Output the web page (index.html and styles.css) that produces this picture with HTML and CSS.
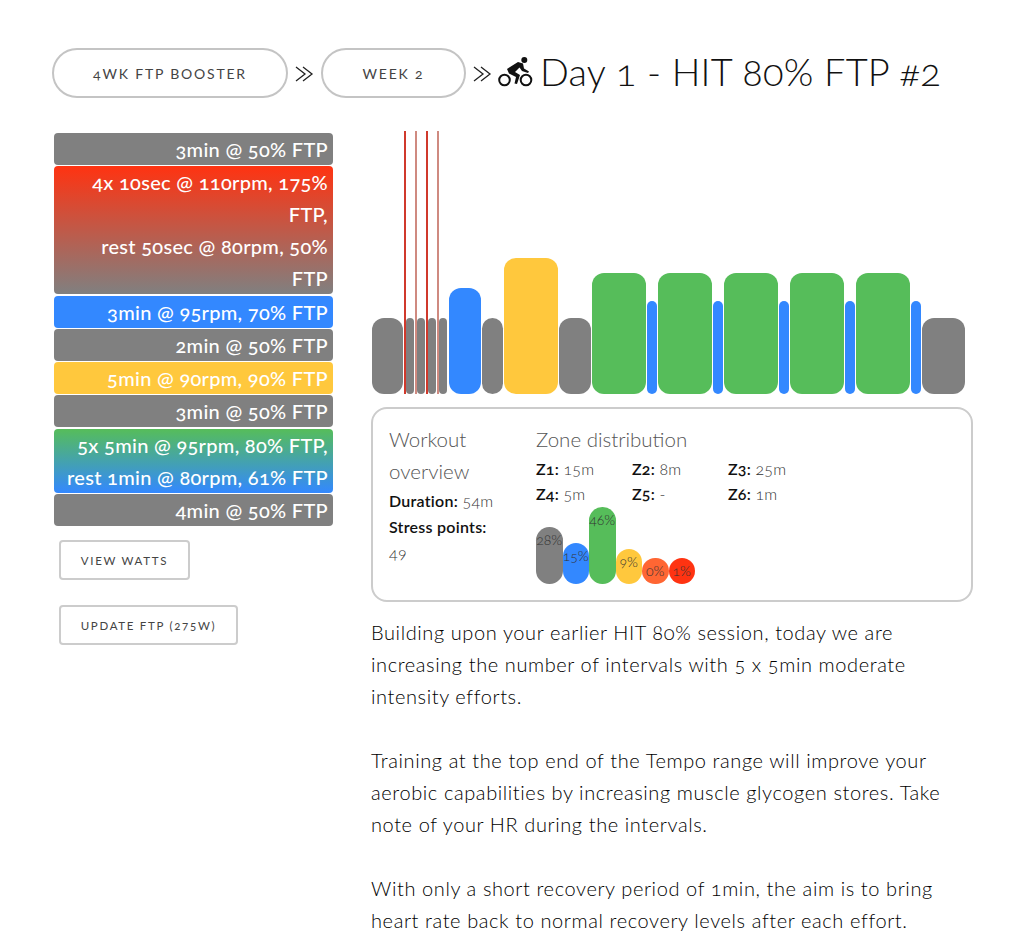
FILE: index.html
```html
<!DOCTYPE html>
<html lang="en">
<head>
<meta charset="utf-8">
<title>Day 1 - HIT 80% FTP #2</title>
<link rel="stylesheet" href="styles.css">
</head>
<body>
<header class="crumbs">
  <a class="pill pill-plan">4wk FTP Booster</a>
  <svg class="sep" viewBox="0 0 33 50" aria-hidden="true"><path d="M8 19 L17 26 L8 33 M15 19 L24 26 L15 33" fill="none" stroke="#222" stroke-width="1.3"/></svg>
  <a class="pill pill-week">Week 2</a>
  <svg class="sep" viewBox="0 0 33 50" aria-hidden="true"><path d="M8 19 L17 26 L8 33 M15 19 L24 26 L15 33" fill="none" stroke="#222" stroke-width="1.3"/></svg>
  <svg class="bike" viewBox="0 0 36 36" aria-hidden="true">
    <circle cx="7.5" cy="27" r="5.3" fill="none" stroke="#111" stroke-width="2"/>
    <circle cx="29" cy="27" r="5.3" fill="none" stroke="#111" stroke-width="2"/>
    <circle cx="27.3" cy="7" r="3" fill="#111"/>
    <path d="M10 16 L21 9 L26 10.5 L27 15.5 L32 18.5 L31 20 L25 18 L22.5 14.5 L18 19 L23 22 L20 31 L17.5 30.5 L19 24 L12 20.5 Z" fill="#111"/>
  </svg>
  <h1 class="title">Day 1 - HIT 80% FTP #2</h1>
</header>
<main class="layout">
  <aside class="side">
    <ul class="steps">
      <li class="step z1">3min @ 50% FTP</li>
      <li class="step z6-rest">4x 10sec @ 110rpm, 175%<br>FTP,<br>rest 50sec @ 80rpm, 50%<br>FTP</li>
      <li class="step z2">3min @ 95rpm, 70% FTP</li>
      <li class="step z1">2min @ 50% FTP</li>
      <li class="step z4">5min @ 90rpm, 90% FTP</li>
      <li class="step z1">3min @ 50% FTP</li>
      <li class="step z3-rest">5x 5min @ 95rpm, 80% FTP,<br>rest 1min @ 80rpm, 61% FTP</li>
      <li class="step z1">4min @ 50% FTP</li>
    </ul>
    <a class="btn btn-watts">View watts</a>
    <a class="btn btn-ftp">Update FTP (275w)</a>
  </aside>
  <section class="content">
    <div class="chart">
      <div class="slot" style="width:33.06px"><div class="bar z1 r-lg" style="height:76px"></div></div>
      <div class="slot line" style="width:1.84px"><div class="bar red" style="height:263px"></div></div>
      <div class="slot" style="width:9.18px"><div class="bar z1 r-sm" style="height:76px"></div></div>
      <div class="slot line" style="width:1.84px"><div class="bar red pale" style="height:263px"></div></div>
      <div class="slot" style="width:9.18px"><div class="bar z1 r-sm" style="height:76px"></div></div>
      <div class="slot line" style="width:1.84px"><div class="bar red" style="height:263px"></div></div>
      <div class="slot" style="width:9.18px"><div class="bar z1 r-sm" style="height:76px"></div></div>
      <div class="slot line" style="width:1.84px"><div class="bar red pale" style="height:263px"></div></div>
      <div class="slot" style="width:9.18px"><div class="bar z1 r-sm" style="height:76px"></div></div>
      <div class="slot" style="width:33.06px"><div class="bar z2 r-lg" style="height:106px"></div></div>
      <div class="slot" style="width:22.04px"><div class="bar z1 r-lg" style="height:76px"></div></div>
      <div class="slot" style="width:55.1px"><div class="bar z4 r-lg" style="height:136px"></div></div>
      <div class="slot" style="width:33.06px"><div class="bar z1 r-lg" style="height:76px"></div></div>
      <div class="slot" style="width:55.1px"><div class="bar z3 r-lg" style="height:121px"></div></div>
      <div class="slot" style="width:11.02px"><div class="bar z2 r-sm" style="height:93px"></div></div>
      <div class="slot" style="width:55.1px"><div class="bar z3 r-lg" style="height:121px"></div></div>
      <div class="slot" style="width:11.02px"><div class="bar z2 r-sm" style="height:93px"></div></div>
      <div class="slot" style="width:55.1px"><div class="bar z3 r-lg" style="height:121px"></div></div>
      <div class="slot" style="width:11.02px"><div class="bar z2 r-sm" style="height:93px"></div></div>
      <div class="slot" style="width:55.1px"><div class="bar z3 r-lg" style="height:121px"></div></div>
      <div class="slot" style="width:11.02px"><div class="bar z2 r-sm" style="height:93px"></div></div>
      <div class="slot" style="width:55.1px"><div class="bar z3 r-lg" style="height:121px"></div></div>
      <div class="slot" style="width:11.02px"><div class="bar z2 r-sm" style="height:93px"></div></div>
      <div class="slot" style="width:44.08px"><div class="bar z1 r-lg" style="height:76px"></div></div>
    </div>
    <div class="card">
      <div class="overview">
        <h2 class="card-title">Workout overview</h2>
        <p class="stat"><b>Duration:</b> 54m</p>
        <p class="stat"><b>Stress points:</b> 49</p>
      </div>
      <div class="zones">
        <h2 class="card-title">Zone distribution</h2>
        <div class="zone-grid">
          <span><b>Z1:</b> 15m</span><span><b>Z2:</b> 8m</span><span><b>Z3:</b> 25m</span>
          <span><b>Z4:</b> 5m</span><span><b>Z5:</b> -</span><span><b>Z6:</b> 1m</span>
        </div>
        <div class="dist">
          <div class="dbar z1" style="height:57px">28%</div>
          <div class="dbar z2" style="height:41px">15%</div>
          <div class="dbar z3" style="height:77px">46%</div>
          <div class="dbar z4" style="height:35px">9%</div>
          <div class="dbar z5" style="height:26px">0%</div>
          <div class="dbar z6" style="height:26px">1%</div>
        </div>
      </div>
    </div>
    <div class="copy">
      <p>Building upon your earlier HIT 80% session, today we are increasing the number of intervals with 5 x 5min moderate intensity efforts.</p>
      <p>Training at the top end of the Tempo range will improve your aerobic capabilities by increasing muscle glycogen stores. Take note of your HR during the intervals.</p>
      <p>With only a short recovery period of 1min, the aim is to bring heart rate back to normal recovery levels after each effort.</p>
    </div>
  </section>
</main>
</body>
</html>
```
FILE: styles.css
```css
* { box-sizing: border-box; }
html, body { margin: 0; padding: 0; }
body {
  font-family: "Lato", "Liberation Sans", sans-serif;
  font-weight: 300;
  font-variant-numeric: oldstyle-nums;
  color: #111;
  background: #fff;
  height: 946px;
  overflow: hidden;
}
.crumbs {
  display: flex;
  align-items: center;
  padding: 48px 0 0 52px;
  height: 98px;
}
.pill {
  display: flex;
  align-items: center;
  justify-content: center;
  height: 50px;
  border: 2px solid #c4c4c4;
  border-radius: 25px;
  font-size: 14px;
  font-weight: 400;
  letter-spacing: 1.8px;
  text-transform: uppercase;
  color: #444;
}
.pill-plan { width: 236px; }
.pill-week { width: 145px; }
.sep { width: 33px; height: 50px; flex: none; margin-top: -1px; }
.bike { width: 36px; height: 36px; margin: -4px 0 0 -2px; flex: none; }
.title {
  margin: 0 0 5px 7px;
  font-size: 38px;
  font-weight: 300;
  line-height: 50px;
  letter-spacing: .2px;
  white-space: nowrap;
  color: #111;
}
.layout {
  display: grid;
  grid-template-columns: 279px 602px;
  column-gap: 38px;
  padding: 35px 0 0 54px;
}
.steps {
  list-style: none;
  margin: 0;
  padding: 0;
  display: flex;
  flex-direction: column;
  gap: 1.3px;
}
.step {
  border-radius: 4px;
  padding: 0 5px;
  text-align: right;
  color: #fff;
  font-size: 20px;
  line-height: 32px;
  letter-spacing: .3px;
  font-weight: 500;
}
.z1 { background: #808080; }
.z2 { background: #3388ff; }
.z3 { background: #56bd5a; }
.z4 { background: #ffc83d; }
.z5 { background: #ff6633; }
.z6 { background: #ff3311; }
.z6-rest { background: linear-gradient(#ff3311, #808080); }
.z3-rest { background: linear-gradient(#56bd5a, #3388ff); }
.btn {
  display: flex;
  align-items: center;
  justify-content: center;
  height: 40px;
  margin: 14px 0 0 5px;
  border: 2px solid #ccc;
  border-radius: 4px;
  font-size: 11.5px;
  font-weight: 400;
  letter-spacing: 1.7px;
  text-transform: uppercase;
  color: #444;
}
.btn-watts { width: 131px; }
.btn-ftp { width: 179px; margin-top: 25px; }
.content { min-width: 0; }
.chart {
  display: flex;
  align-items: flex-end;
  height: 263px;
  margin-top: -2px;
}
.slot { flex: none; padding: 0 .6px; }
.slot.line { padding: 0 .2px; }
.bar { width: 100%; }
.r-lg { border-radius: 12px; }
.r-sm { border-radius: 5px; }
.red { background: #d0392c; }
.red.pale { background: #cf8a80; }
.card {
  display: flex;
  height: 195px;
  margin-top: 13px;
  padding: 14px 16px;
  border: 2px solid #ccc;
  border-radius: 16px;
}
.overview { width: 147px; flex: none; }
.card-title {
  margin: 0;
  font-size: 20.5px;
  font-weight: 300;
  line-height: 32px;
  color: #555;
}
.overview .card-title { width: 110px; }
.stat {
  margin: 0;
  width: 115px;
  font-size: 16px;
  line-height: 26px;
  letter-spacing: .25px;
  color: #333;
}
.stat:first-of-type { margin-top: 1px; }
.stat b { font-weight: 600; color: #111; }
.zones { flex: 1; }
.zone-grid {
  display: grid;
  grid-template-columns: repeat(3, 96px);
  grid-auto-rows: 25px;
  font-size: 16px;
  line-height: 25px;
  letter-spacing: .2px;
  color: #333;
  margin-top: 1px;
}
.zone-grid b { font-weight: 600; color: #111; }
.dist {
  display: flex;
  align-items: flex-end;
  height: 77px;
  margin-top: 1px;
}
.dbar {
  width: 26.5px;
  border-radius: 13.25px;
  text-align: center;
  font-size: 14px;
  line-height: 26px;
  color: #333;
  overflow: hidden;
}
.copy { margin-top: 14px; }
.copy p {
  margin: 0 0 32px;
  font-size: 20px;
  line-height: 32px;
  letter-spacing: .6px;
  color: #000;
}
```
